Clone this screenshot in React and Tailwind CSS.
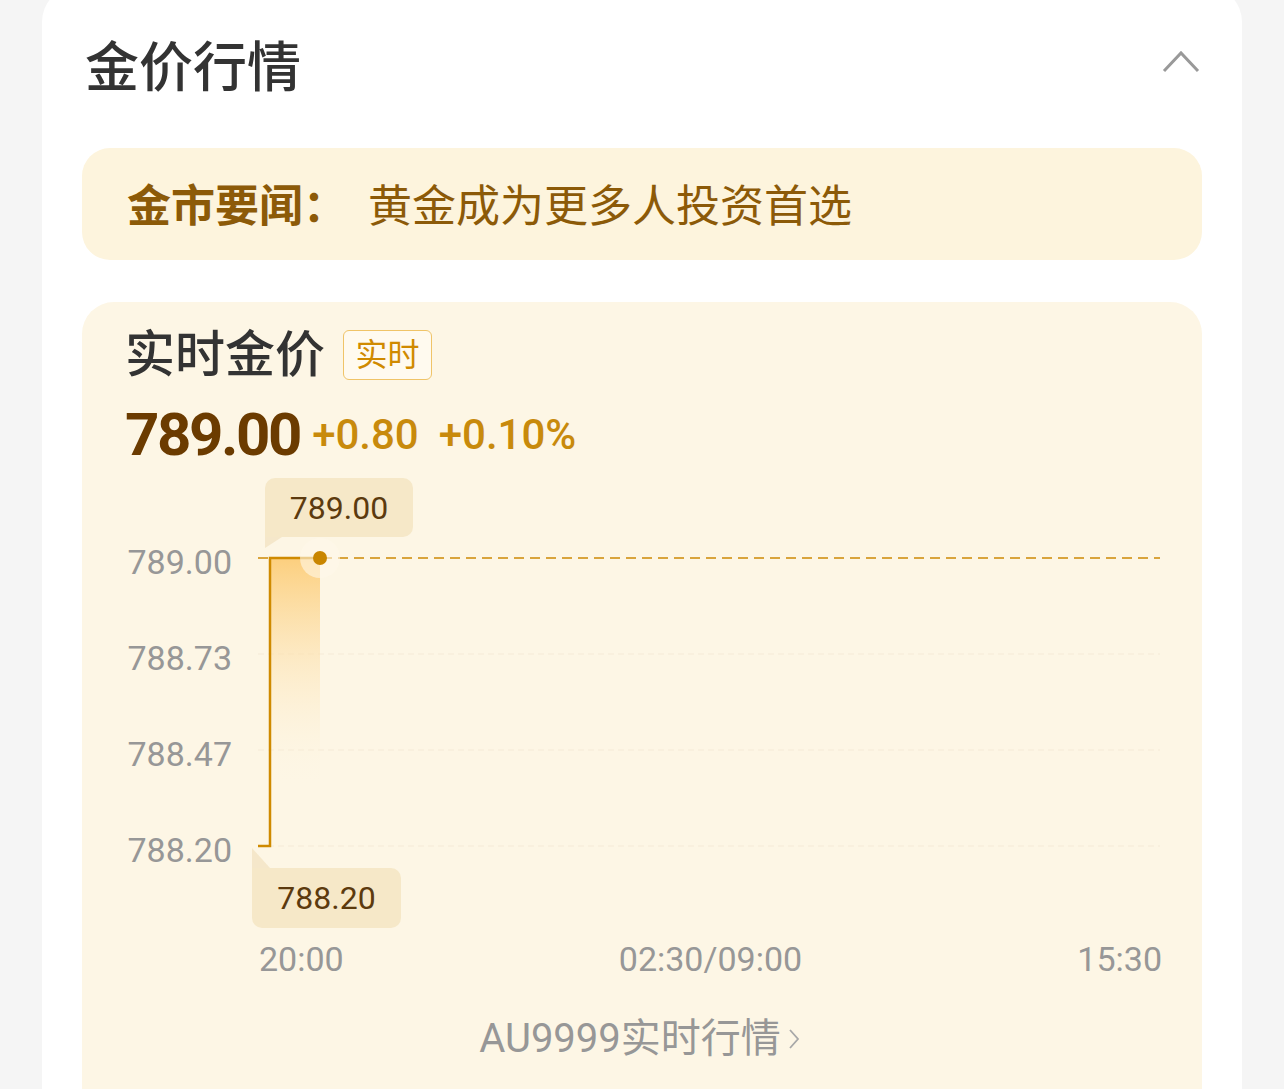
const font = { fontFamily: 'Roboto, "Noto Sans CJK SC", sans-serif' };

function PriceChart() {
  return (
    <div className="relative mt-[5px] flex h-[460px]">
      {/* y axis */}
      <div className="w-[150px] pt-[44px] text-right text-[34px] text-[#979797]">
        <div className="h-[96px] leading-[96px]">789.00</div>
        <div className="h-[96px] leading-[96px]">788.73</div>
        <div className="h-[96px] leading-[96px]">788.47</div>
        <div className="h-[96px] leading-[96px]">788.20</div>
      </div>

      {/* plot */}
      <svg className="ml-[26px]" width="902" height="460" viewBox="0 0 902 460">
        <defs>
          <linearGradient id="fill" x1="0" y1="0" x2="0" y2="1">
            <stop offset="0" stopColor="#fccf7e" stopOpacity="1" />
            <stop offset="1" stopColor="#fdf6e5" stopOpacity="0" />
          </linearGradient>
        </defs>
        <line x1="0" y1="184" x2="902" y2="184" stroke="#f7eedb" strokeWidth="1.5" strokeDasharray="6 4" />
        <line x1="0" y1="280" x2="902" y2="280" stroke="#f7eedb" strokeWidth="1.5" strokeDasharray="6 4" />
        <line x1="0" y1="376" x2="902" y2="376" stroke="#f7eedb" strokeWidth="1.5" strokeDasharray="6 4" />
        <rect x="12" y="88" width="50" height="230" fill="url(#fill)" />
        <line x1="0" y1="88" x2="902" y2="88" stroke="#d9a43c" strokeWidth="2" strokeDasharray="10 6" />
        <path d="M0 376 H12 V88 H62" fill="none" stroke="#cf8a00" strokeWidth="2.5" />
        <circle cx="62" cy="88" r="20" fill="#fff8ea" opacity="0.6" />
        <circle cx="62" cy="88" r="7" fill="#c98600" />
      </svg>

      {/* tooltips */}
      <div className="absolute left-[183px] top-[8px] flex h-[59px] w-[148px] items-center justify-center rounded-[10px] rounded-bl-none bg-[#f6e8c8] text-[32px] text-[#5c3a0e]">
        789.00
        <svg className="absolute left-0 top-[59px]" width="18" height="12" viewBox="0 0 18 12">
          <polygon points="0,0 17,0 0,11" fill="#f3e4c3" opacity="0.8" />
        </svg>
      </div>
      <div className="absolute left-[170px] top-[398px] flex h-[60px] w-[149px] items-center justify-center rounded-[10px] rounded-tl-none bg-[#f6e8c8] text-[32px] text-[#5c3a0e]">
        788.20
        <svg className="absolute left-0 top-[-20px]" width="18" height="20" viewBox="0 0 18 20">
          <polygon points="0,0 0,20 18,20" fill="#f3e4c3" opacity="0.8" />
        </svg>
      </div>
    </div>
  );
}

export default function App() {
  return (
    <div className="h-[1089px] overflow-hidden bg-[#f5f5f5]" style={font}>
      <div className="mx-[42px] -mt-[14px] rounded-[36px] bg-white px-[40px]">
        {/* Header */}
        <div className="flex h-[162px] items-center justify-between">
          <h1 className="pl-[3px] pt-[2px] text-[54px] font-medium text-[#333333]">金价行情</h1>
          <svg className="mb-[10px] mr-[2px]" width="38" height="24" viewBox="0 0 38 24">
            <path d="M2 21 L19 3 L36 21" fill="none" stroke="#999999" strokeWidth="3" />
          </svg>
        </div>

        {/* News */}
        <div className="flex h-[112px] items-center rounded-[28px] bg-[#fdf4dd] pl-[45px] pt-[5px] text-[44px] text-[#8c5a08]">
          <span className="font-bold">金市要闻：</span>
          <span className="ml-[21px]">黄金成为更多人投资首选</span>
        </div>

        {/* Realtime price */}
        <div className="mt-[42px] rounded-[32px] bg-[#fdf6e5] pb-[60px] pt-[25px]">
          <div className="flex h-[56px] items-center pl-[43px]">
            <span className="text-[50px] font-medium text-[#333333]">实时金价</span>
            <span className="ml-[18px] flex h-[50px] w-[89px] items-center justify-center rounded-[6px] border border-[#f0c468] bg-[#fffaef] text-[32px] text-[#d08a00]">
              实时
            </span>
          </div>

          <div className="mt-[22px] flex h-[60px] items-center pl-[43px] leading-[60px]">
            <span className="text-[60px] font-bold tracking-[-0.04em] text-[#6b3b00]">789.00</span>
            <span className="ml-[12px] text-[42px] font-medium text-[#c88a0c]">+0.80</span>
            <span className="ml-[20px] text-[42px] font-medium text-[#c88a0c]">+0.10%</span>
          </div>

          <PriceChart />

          <div className="mt-[1px] flex h-[56px] justify-between pl-[177px] pr-[40px] text-[34px] leading-[56px] text-[#979797]">
            <span>20:00</span>
            <span>02:30/09:00</span>
            <span>15:30</span>
          </div>

          <div className="mt-[22px] flex h-[60px] items-center justify-center pr-[4px] text-[40px] text-[#979797]">
            <span>AU9999实时行情</span>
            <svg className="ml-[6px]" width="14" height="28" viewBox="0 0 14 28">
              <path d="M3 5 L11 14 L3 23" fill="none" stroke="#a8a8a8" strokeWidth="1.8" />
            </svg>
          </div>
        </div>
      </div>
    </div>
  );
}
